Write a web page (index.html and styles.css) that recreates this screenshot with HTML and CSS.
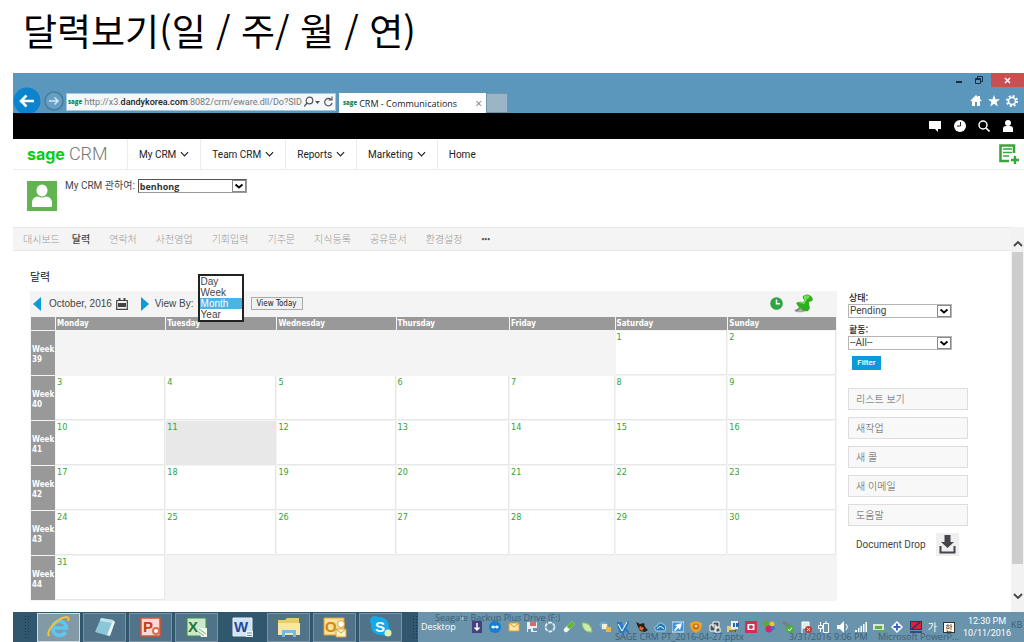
FILE: index.html
```html
<!DOCTYPE html>
<html lang="ko">
<head>
<meta charset="utf-8">
<meta name="viewport" content="width=device-width, initial-scale=1">
<title>달력보기</title>
<link rel="stylesheet" href="styles.css">
</head>
<body>
<svg class="defs" aria-hidden="true">
  <symbol id="chev" viewBox="0 0 10 6"><path d="M1 1l4 4 4-4" fill="none" stroke="currentColor" stroke-width="1.3"/></symbol>
  <symbol id="drop" viewBox="0 0 14 12"><rect x=".5" y=".5" width="13" height="11" fill="#fff" stroke="#8a8a8a"/><path d="M3.5 4.5L7 7.5l3.500-3" fill="none" stroke="#000" stroke-width="1.800"/></symbol>
</svg>

<h1 class="slide-title">달력보기(일 / 주/ 월 / 연)</h1>

<div class="window">
  <header class="chrome">
    <div class="caption">
      <button class="cap" aria-label="Minimize"><svg width="8" height="8"><path d="M1 5h6v2H1z" fill="#17303f"/></svg></button>
      <button class="cap" aria-label="Restore"><svg width="8" height="8" fill="none" stroke="#17303f"><path d="M2.500 2V.5h5v5H6M.5 2.500h5v5h-5zM1 3.500h4"/></svg></button>
      <button class="cap close" aria-label="Close"><svg width="7" height="7"><path d="M1 1l5 5M6 1L1 6" stroke="#fff" stroke-width="1.500"/></svg></button>
    </div>
    <div class="addressrow">
      <button class="back" aria-label="Back"><svg width="28" height="28" viewBox="0 0 28 28"><circle cx="14" cy="14" r="13.500" fill="#0b84cd"/><path d="M21 14H8M13.500 8.500L8 14l5.500 5.500" fill="none" stroke="#fff" stroke-width="2.500"/></svg></button>
      <button class="forward" aria-label="Forward"><svg width="20" height="20" viewBox="0 0 20 20"><circle cx="10" cy="10" r="9" fill="#659fc3" stroke="#477b9d" stroke-width="1.500"/><path d="M5 10h9M10.500 6.500L14 10l-3.500 3.500" fill="none" stroke="#d5e7f2" stroke-width="1.500"/></svg></button>
      <div class="address">
        <span class="fav">sage</span>
        <span class="url">http://x3.<b>dandykorea.com</b>:8082/crm/eware.dll/Do?SID</span>
        <svg width="30" height="12" viewBox="0 0 30 12" fill="none" stroke="#555" stroke-width="1.200"><circle cx="5.500" cy="4.500" r="3.300"/><path d="M3.200 7L0 10.500"/><path d="M11 5h5l-2.500 3z" fill="#555" stroke="none"/><path d="M27 3.500A3.700 3.700 0 1 0 28 7M28 .5v3.500h-3.500"/></svg>
      </div>
      <div class="tab"><span class="fav">sage</span><span class="tabname">CRM - Communications</span><button class="tabclose" aria-label="Close tab">×</button></div>
      <button class="newtab" aria-label="New tab"></button>
      <div class="tools">
        <svg width="12" height="12"><path d="M6 0L0 6h2v5h3V7h2v4h3V6h2L10 4V1H8v1z" fill="#fff"/></svg>
        <svg width="12" height="12"><path d="M6 0l1.500 4.200H12L8.500 7l1.300 4.500L6 8.800l-3.800 2.700L3.500 7 0 4.200h4.500z" fill="#fff"/></svg>
        <svg width="12" height="12"><circle cx="6" cy="6" r="5" fill="none" stroke="#fff" stroke-width="2" stroke-dasharray="2 1.930"/><circle cx="6" cy="6" r="3.500" fill="none" stroke="#fff" stroke-width="1.500"/></svg>
      </div>
    </div>
  </header>

  <div class="blackbar">
    <svg width="13" height="12"><path d="M0 1h12v8H9v3L6 9H0z" fill="#fff"/></svg>
    <svg width="12" height="12"><circle cx="6" cy="6" r="6" fill="#fff"/><path d="M6.500 2v4H3" fill="none" stroke="#222"/></svg>
    <svg width="12" height="12"><circle cx="5" cy="5" r="4" fill="none" stroke="#fff" stroke-width="1.500"/><path d="M8 8l3.500 3.500" stroke="#fff" stroke-width="1.600"/></svg>
    <svg width="12" height="12"><circle cx="6" cy="3" r="3" fill="#fff"/><path d="M1 12V9q0-3 3-3h4q3 0 3 3v3z" fill="#fff"/></svg>
  </div>

  <nav class="mainnav">
    <div class="logo"><b>sage</b><span>CRM</span></div>
    <a href="#">My CRM <svg width="9" height="6"><use href="#chev"/></svg></a>
    <a href="#">Team CRM <svg width="9" height="6"><use href="#chev"/></svg></a>
    <a href="#">Reports <svg width="9" height="6"><use href="#chev"/></svg></a>
    <a href="#">Marketing <svg width="9" height="6"><use href="#chev"/></svg></a>
    <a href="#" class="last">Home</a>
    <button class="addnew" aria-label="New"><svg width="21" height="21" viewBox="0 0 21 21"><path d="M16 9V1.500H2.500V17H11" fill="none" stroke="#38a63c" stroke-width="2.600"/><path d="M5 5h9M5 8.500h9M5 12h6" stroke="#38a63c" stroke-width="1.700"/><path d="M17 12v8M13 16h8" stroke="#38a63c" stroke-width="2.400"/></svg></button>
  </nav>

  <div class="context">
    <svg class="avatar" width="30" height="30" viewBox="0 0 30 30"><path fill="#61b450" d="M0 0h30v30H0z"/><ellipse cx="15" cy="9.500" rx="5.500" ry="6" fill="#fff"/><path d="M5 25v-3q0-6 6-6.500 4 2 8 0 6 .5 6 6.500v3q0 1-1 1H6q-1 0-1-1z" fill="#fff"/></svg>
    <label for="who">My CRM 관하여:</label>
    <span class="combo who"><select id="who"><option>benhong</option></select><svg width="14" height="12"><use href="#drop"/></svg></span>
  </div>

  <div class="work">
    <div class="pane">
      <nav class="tabs">
        <a href="#">대시보드</a><a href="#" class="on">달력</a><a href="#">연락처</a><a href="#">사전영업</a><a href="#">기회입력</a><a href="#">기주문</a><a href="#">지식등록</a><a href="#">공유문서</a><a href="#">환경설정</a><a href="#" class="more">•••</a>
      </nav>
      <main class="content">
        <h2>달력</h2>
        <div class="columns">
          <section class="calendar">
            <div class="calbar">
              <button aria-label="Previous"><svg width="8" height="14"><path d="M8 0v14L0 7z" fill="#0a9bd8"/></svg></button>
              <span class="month">October, 2016</span>
              <svg class="calicon" width="12" height="12" viewBox="0 0 12 12"><path d="M.7 2.500h10.600v8.800H.7z" fill="none" stroke="#444" stroke-width="1.200"/><path d="M2.500 0h2v3h-2zM7.500 0h2v3h-2zM2 5h8v4H2z" fill="#444"/></svg>
              <button aria-label="Next"><svg width="8" height="14"><path d="M0 0v14l8-7z" fill="#0a9bd8"/></svg></button>
              <label class="viewby" for="view">View By:</label>
              <span class="viewslot"><select id="view" size="4"><option>Day</option><option>Week</option><option selected>Month</option><option>Year</option></select></span>
              <button class="today">View Today</button>
              <span class="calactions">
                <svg width="13" height="13" viewBox="0 0 13 13"><circle cx="6.500" cy="6.500" r="6.300" fill="#30a343"/><path d="M6.500 2.500v4.300H10" fill="none" stroke="#fff" stroke-width="1.500"/></svg>
                <svg width="20" height="19" viewBox="0 0 20 19"><ellipse cx="6" cy="16.500" rx="5.500" ry="1.800" fill="#aaa"/><path d="M8 12l-6 5" stroke="#777" stroke-width="1.500"/><path d="M9 2q4-3 8 0 3 3 1 5l-3 1v3q2 3-1 6-4 1-7-2-3-2-5-6 3-2 7-1l2-2q-3-1-2-4z" fill="#2fae20"/><path d="M10 2q4-2 6 1l-3 2-2 4-1 1q-3-1-6-1 2-1 5-1l2-2q-2-2-1-4z" fill="#74df55"/></svg>
              </span>
            </div>
            <table>
              <colgroup><col class="wk"><col class="mon"><col class="tue"><col class="wed"><col class="thu"><col class="fri"><col class="sat"><col class="sun"></colgroup>
              <thead><tr><th></th><th>Monday</th><th>Tuesday</th><th>Wednesday</th><th>Thursday</th><th>Friday</th><th>Saturday</th><th>Sunday</th></tr></thead>
              <tbody>
                <tr><th>Week<br>39</th><td class="off" colspan="5"></td><td>1</td><td>2</td></tr>
                <tr><th>Week<br>40</th><td>3</td><td>4</td><td>5</td><td>6</td><td>7</td><td>8</td><td>9</td></tr>
                <tr><th>Week<br>41</th><td>10</td><td class="now">11</td><td>12</td><td>13</td><td>14</td><td>15</td><td>16</td></tr>
                <tr><th>Week<br>42</th><td>17</td><td>18</td><td>19</td><td>20</td><td>21</td><td>22</td><td>23</td></tr>
                <tr><th>Week<br>43</th><td>24</td><td>25</td><td>26</td><td>27</td><td>28</td><td>29</td><td>30</td></tr>
                <tr><th>Week<br>44</th><td>31</td><td class="off" colspan="6"></td></tr>
              </tbody>
            </table>
          </section>
          <aside class="side">
            <label for="status">상태:</label>
            <span class="combo"><select id="status"><option>Pending</option></select><svg width="14" height="12"><use href="#drop"/></svg></span>
            <label for="action">활동:</label>
            <span class="combo"><select id="action"><option>--All--</option></select><svg width="14" height="12"><use href="#drop"/></svg></span>
            <button class="filter">Filter</button>
            <div class="actions">
              <button>리스트 보기</button><button>새작업</button><button>새 콜</button><button>새 이메일</button><button>도움말</button>
            </div>
            <div class="docdrop"><span>Document Drop</span><svg width="23" height="23" viewBox="0 0 23 23"><path fill="#efefef" d="M0 0h23v23H0z"/><path d="M8.500 2h6v7H18l-6.500 6L5 9h3.500z" fill="#45454c"/><path d="M4.500 13v6.500h14V13" fill="none" stroke="#45454c" stroke-width="2"/></svg></div>
          </aside>
        </div>
      </main>
    </div>
    <div class="scroll" aria-hidden="true">
      <svg width="10" height="6" viewBox="0 0 10 6"><path d="M1 5l4-4 4 4" fill="none" stroke="#444" stroke-width="1.800"/></svg>
      <span class="thumb"></span>
      <svg width="10" height="6" viewBox="0 0 10 6"><path d="M1 1l4 4 4-4" fill="none" stroke="#444" stroke-width="1.800"/></svg>
    </div>
  </div>

  <footer class="taskbar">
    <div class="ghosts" aria-hidden="true"><span class="g1">Seagate Backup Plus Drive (F:)</span><span class="g2">SAGE CRM PT_2016-04-27.pptx</span><span class="g3">3/31/2016 9:06 PM</span><span class="g4">Microsoft PowerP...</span><span class="g5">KB</span></div>
    <div class="apps">
      <i class="grip"></i>
      <button class="active" aria-label="Internet Explorer"><svg width="24" height="22" viewBox="0 0 24 22"><path d="M18.500 16a7 7 0 1 1 1-4H7" fill="none" stroke="#5cc8f2" stroke-width="3.600"/><path d="M2 20C-1 15 9 3 19 1q4 0 2 4" fill="none" stroke="#f4c332" stroke-width="2"/></svg></button>
      <button aria-label="Notes"><svg width="24" height="22" viewBox="0 0 24 22"><path d="M8 2l12 2-4 16L2 16z" fill="#8dc6d6"/><path d="M20 4l2 2-5 14-3-1z" fill="#e9f6f8"/><path d="M8 2l12 2-1 3L7 5z" fill="#bfe4ec"/></svg></button>
      <button aria-label="PowerPoint"><svg width="24" height="22" viewBox="0 0 24 22"><path d="M2 2h19v18H2z" fill="#f9ddd4" stroke="#d9512e" stroke-width="1.500"/><text x="4" y="16" class="app ppt">P</text><circle cx="17" cy="15" r="3" fill="#fff" stroke="#e06c4a" stroke-width="2"/></svg></button>
      <button aria-label="Excel"><svg width="24" height="22" viewBox="0 0 24 22"><path d="M2 2h19v18H2z" fill="#cfe8cc" stroke="#39924a"/><text x="3" y="16" class="app xls">X</text><path d="M13 12h9v9h-6z" fill="#f1f9ef"/><path d="M14 13l7 5M14 16l5 4" stroke="#6bb16c"/></svg></button>
      <button class="plain" aria-label="Word"><svg width="24" height="22" viewBox="0 0 24 22"><path d="M2 2h19v18H2z" fill="#d4e2f5" stroke="#e8f0fa"/><text x="3" y="16" class="app doc">W</text><path d="M15 15h7v6h-7z" fill="#f1f6fb"/><path d="M16 17h5M16 19.500h5" stroke="#5b86c4"/></svg></button>
      <button aria-label="Explorer"><svg width="24" height="22" viewBox="0 0 24 22"><path d="M1 4h7l2-2h12v17H1z" fill="#e8cb6f"/><path d="M1 7h22v12H1z" fill="#f7e7a0"/><path d="M5 21v-7h14v7h-3v-4H8v4z" fill="#6ebde7"/></svg></button>
      <button aria-label="Outlook"><svg width="24" height="22" viewBox="0 0 24 22"><path d="M1 2h20v17H1z" fill="#fbe2a0" stroke="#e7a123"/><text x="2" y="16" class="app out">O</text><circle cx="18" cy="8" r="3.500" fill="#fff" stroke="#dc9c28"/><path d="M13 13h10v8H13z" fill="#fff3c7" stroke="#d6a133"/><path d="M13 13l5 4 5-4" fill="none" stroke="#d6a133"/></svg></button>
      <button aria-label="Skype"><svg width="24" height="22" viewBox="0 0 24 22"><circle cx="11" cy="10" r="9" fill="#16a9e8"/><circle cx="6" cy="5" r="5" fill="#16a9e8"/><circle cx="16" cy="15" r="5" fill="#16a9e8"/><text x="6" y="16" class="app sky">S</text><circle cx="19" cy="17" r="3.500" fill="#dff3b5"/></svg></button>
      <i class="grip"></i>
    </div>
    <span class="desk">Desktop</span><span class="raquo">»</span>
    <div class="tray">
      <svg viewBox="0 0 12 12"><path d="M1 0h10v12H1z" fill="#46407e"/><path d="M6 2v7M3.500 6.500L6 9l2.500-2.500" fill="none" stroke="#fff" stroke-width="1.500"/></svg>
      <svg viewBox="0 0 12 12"><circle cx="6" cy="6" r="6" fill="#147fd3"/><path d="M2 6l2.500-2v1.300h3V4L10 6 7.500 8V6.800h-3V8z" fill="#fff"/></svg>
      <svg viewBox="0 0 12 12"><path d="M1 2h10v8H1z" fill="#ffe9a8" stroke="#e0a030"/><path d="M1 2l5 4 5-4" fill="none" stroke="#dd9425"/></svg>
      <svg viewBox="0 0 12 12"><path d="M1 1h10v10H1z" fill="#e8edf1"/><path d="M4 1h6v4H4z" fill="#d76c64"/><path d="M2 8h3v3H2zM7 7h4v3H7z" fill="#708fae"/></svg>
      <svg viewBox="0 0 12 12"><circle cx="6" cy="6" r="4.500" fill="none" stroke="#e5edf2" stroke-width="1.800" stroke-dasharray="3.700 1"/></svg>
      <svg viewBox="0 0 12 12"><path d="M3 9l6-6" stroke="#f2f6ef" stroke-width="4.500" stroke-linecap="round"/><path d="M6.500 5.500L9 3" stroke="#61b928" stroke-width="4.500" stroke-linecap="round"/></svg>
      <svg viewBox="0 0 12 12"><path d="M1 2q9-1 10 9-9 1-10-9z" fill="#cdeca9" stroke="#8fc86a"/></svg>
      <svg viewBox="0 0 12 12"><path d="M0 3q5-5 9 0v6H3z" fill="#6bb0d3"/><path d="M3 3h5v5H3z" fill="#f4efd4"/><path d="M7 6h5v5H7z" fill="#e7b64b"/></svg>
      <svg viewBox="0 0 12 12"><path d="M0 2h4l2 8-2 2zM6 12L12 0M7 6l5 6" fill="#3b94db" stroke="#2478c8" stroke-width="2"/><path d="M1 3l4 7L10 1" fill="none" stroke="#fff"/></svg>
      <svg viewBox="0 0 12 12"><path d="M0 1l4 2 4-1 1 4 3 3-3 2-5-1-2-4z" fill="#2c211c"/><path d="M4 5l4 2-2 3-3-2z" fill="#e16724"/></svg>
      <svg viewBox="0 0 12 12"><path d="M2 10q-3-4 1-5 2-5 6-2 4 2 2 7z" fill="#2579b8" stroke="#a5d2ec"/><path d="M3 8q3-5 7 0" fill="none" stroke="#fff"/></svg>
      <svg viewBox="0 0 12 12"><path d="M0 1h12v10H0z" fill="#3d94e0" stroke="#dcecf7"/><path d="M10 2L8 9 6.500 7 3 10l-1-1 3-3.500L3 4z" fill="#fff"/></svg>
      <svg viewBox="0 0 12 12"><path d="M6 0l6 2q0 8-6 10Q0 10 0 2z" fill="#eda51f"/><circle cx="6" cy="5.500" r="3" fill="#ce5e24"/><circle cx="6" cy="5" r="1.500" fill="#ffe06a"/></svg>
      <svg viewBox="0 0 12 12"><path d="M4 1h6v5H4zM1 4h6v6H1zM6 7h5v4H6z" fill="#4a4f54" stroke="#fff"/></svg>
      <svg viewBox="0 0 12 12"><path d="M0 5h8v6H0z" fill="#e8cb6f"/><path d="M4 0h7v8H4z" fill="#e8f0f6"/><path d="M6 2h2v4H6zM9 2h3v4H9z" fill="#2c66a8"/><path d="M2 10h7" stroke="#222"/></svg>
      <svg viewBox="0 0 12 12"><path d="M0 0h12v12H0z" fill="#d82c53"/><path d="M2.500 3h7v6h-7z" fill="#fff"/><circle cx="6" cy="6" r="2" fill="#d82c53"/></svg>
      <svg viewBox="0 0 12 12"><circle cx="3" cy="3" r="3" fill="#63a82b"/><circle cx="9" cy="3" r="2.500" fill="#f0c32f"/><circle cx="6" cy="8" r="3.500" fill="#c92780"/><circle cx="10" cy="7" r="2" fill="#3878c7"/></svg>
      <svg viewBox="0 0 12 12"><path d="M1 1l5 3v4" fill="none" stroke="#777e83" stroke-width="3"/><circle cx="8" cy="8" r="4" fill="#4aaf37"/><path d="M6 8l1.500 2L10 6.500" fill="none" stroke="#fff"/></svg>
      <svg viewBox="0 0 12 12"><path d="M2 1v11M2 1h7v6H2" fill="#dce8f0" stroke="#fff"/><circle cx="8.500" cy="8.500" r="3.500" fill="#cf3535"/><path d="M7 7l3 3M10 7l-3 3" stroke="#fff"/></svg>
      <svg viewBox="0 0 12 12" fill="none" stroke="#fff"><path d="M5.500 2.500h5v9h-5zM7 1h2M2.500 1v3M.5 4.500h4v3h-4zM2.500 8v3"/></svg>
      <svg viewBox="0 0 12 12"><path d="M0 4h3l4-4v12L3 8H0z" fill="#fff"/><path d="M9 3q3 3 0 6" fill="none" stroke="#fff"/></svg>
      <svg viewBox="0 0 12 12"><path d="M0 9h2v2H0zM3 7h1.500v4H3zM5.500 5H7v6H5.500zM8 3h1.500v8H8zM10.500 1H12v10h-1.500z" fill="#fff"/></svg>
      <svg viewBox="0 0 12 12"><path d="M0 3h11v6H0z" fill="#d9e6cf"/><path d="M2 5h7v3H2zM6 9h6L9 12z" fill="#55b548"/></svg>
      <svg viewBox="0 0 12 12"><path d="M6 0l6 6-6 6-6-6z" fill="#fff"/><path d="M6 2.500v7M2.500 6h7" stroke="#3b66c8" stroke-width="2"/></svg>
      <svg viewBox="0 0 12 12"><path d="M0 0h12v9H0z" fill="#25346b"/><path d="M1 1h10v7H1z" fill="#d22630"/><path d="M2 8l8-7M0 11h12" stroke="#25346b" stroke-width="1.500"/></svg>
      <span class="ime">가</span><span class="ime boxed">한</span>
    </div>
    <time class="clock">12:30 PM<br>10/11/2016</time>
  </footer>
</div>
</body>
</html>
```

FILE: styles.css
```css
* { box-sizing: border-box; }
body {
  margin: 0;
  min-height: 100vh;
  display: flex;
  flex-direction: column;
  background: #fff;
  color: #444;
  font-family: "Liberation Sans", "Noto Sans CJK KR", sans-serif;
  font-size: 10px;
}
svg { display: block; flex: none; }
button { padding: 0; border: 0; background: none; font: inherit; color: inherit; }
a { color: inherit; text-decoration: none; }
.defs { position: absolute; width: 0; height: 0; }

.slide-title {
  margin: 0;
  padding: 6px 23px 0;
  height: 73px;
  color: #000;
  font: 400 37px/48px "Noto Sans CJK KR", sans-serif;
}
.window { flex: 1; display: flex; flex-direction: column; margin-left: 13px; }

/* Browser frame */
.chrome { background: #5b97bc; }
.caption { display: flex; justify-content: flex-end; height: 14px; }
.cap { width: 20px; display: grid; place-items: center; }
.close { width: 33px; margin-left: 2px; background: #c9504f; }
.addressrow {
  display: flex;
  align-items: flex-end;
  height: 26px;
  font-family: "Open Sans", sans-serif;
  font-size: 9px;
}
.back { margin: 0 3px -2px 0; }
.forward { margin: 0 2px 2px 0; }
.address {
  display: flex;
  align-items: center;
  gap: 2px;
  width: 270px;
  height: 18px;
  margin: 0 3px 2px 0;
  padding: 0 2px 0 1px;
  background: #f4f8fb;
  border: 1px solid #a6c6dc;
}
.url { flex: 1; color: #777; white-space: nowrap; font-family: Roboto, sans-serif; }
.url b { color: #222; font-weight: 500; }
.fav { color: #0a8a62; font-size: 6px; font-weight: 800; line-height: 8px; }
.tab { display: flex; align-items: center; gap: 2px; width: 147px; height: 20px; padding: 0 4px; background: #fff; color: #222; }
.tabname { flex: 1; white-space: nowrap; }
.tabclose { color: #777; font-size: 12px; }
.newtab { width: 22px; height: 20px; background: #9bb4c6; border: 1px solid #6d93ad; }
.tools { display: flex; gap: 6px; margin: 0 6px 6px auto; }
.blackbar { display: flex; justify-content: flex-end; align-items: center; gap: 12px; height: 26px; padding-right: 10px; background: #000; }

/* Application header */
.mainnav { display: flex; align-items: stretch; height: 31px; border-bottom: 1px solid #ececec; color: #222; }
.logo { display: flex; align-items: center; gap: 4px; width: 115px; padding-left: 14px; border-right: 1px solid #ececec; }
.logo b { color: #0bcb17; font: 700 16px/24px Inter, sans-serif; }
.logo span { color: #777; font: 300 18px/24px Roboto, sans-serif; }
.mainnav a { display: flex; align-items: center; gap: 4px; padding: 0 11px; border-right: 1px solid #ececec; font-family: Roboto, sans-serif; }
.mainnav .last { border: 0; }
.addnew { margin: 0 5px 0 auto; }
.context { display: flex; align-items: flex-start; gap: 3px; height: 57px; padding: 9px 14px; }
.avatar { margin-top: 2px; }
.context label { padding-left: 5px; font: 10px/13px Roboto, "Noto Sans CJK KR", sans-serif; }
.combo { display: grid; align-items: center; width: 104px; }
.combo select, .combo svg { grid-area: 1 / 1; }
.combo select {
  width: 100%;
  height: 14px;
  padding: 0 16px 0 1px;
  appearance: none;
  border: 1px solid #b5b5b5;
  border-radius: 0;
  background: #fff;
  color: #444;
  font: 10px/12px Roboto, sans-serif;
}
.combo svg { justify-self: end; margin-right: 1px; pointer-events: none; }
.who { width: 109px; }
.who select { border-color: #555 #999 #999 #555; font: 700 9px/11px "Open Sans", sans-serif; color: #333; }

/* Tabs and scrolling pane */
.work { flex: 1; display: flex; }
.pane { flex: 1; min-width: 0; }
.tabs {
  display: flex;
  align-items: center;
  gap: 19px;
  height: 24px;
  padding: 0 10px;
  background: #f4f4f4;
  border-top: 1px solid #e8e8e8;
  border-bottom: 1px solid #e8e8e8;
  color: #999;
  font: 300 10px/12px "Noto Sans CJK KR", sans-serif;
  white-space: nowrap;
}
.tabs .on { margin-left: -7px; color: #444; font-weight: 500; }
.tabs .more { color: #555; font-size: 9px; }
.scroll { display: flex; flex-direction: column; align-items: center; gap: 5px; width: 13px; padding: 14px 0 13px; background: #f2f2f2; }
.thumb { width: 11px; flex: 1; margin-bottom: 24px; background: #cdcdcd; }
.content { padding: 17px 43px 0 17px; }
.content h2 { margin: 0; color: #222; font: 400 11px/16px "Noto Sans CJK KR", sans-serif; }
.columns { display: flex; gap: 11px; margin-top: 7px; }
.calendar { flex: 1; min-width: 0; background: #f4f4f4; }
.calbar { display: flex; align-items: center; height: 25px; padding: 0 23px 0 3px; }
.month { margin: 0 4px 0 8px; }
.calicon { margin-right: 13px; }
.viewby { margin-left: 6px; }
.viewslot { position: relative; width: 45px; height: 16px; margin: 0 8px 0 4px; }
.viewslot select {
  position: absolute;
  top: -22px;
  left: 0;
  width: 46px;
  height: 48px;
  padding: 0;
  overflow: hidden;
  border: 2px solid #222;
  border-radius: 0;
  background: #fff;
  outline: 0;
  font: 10px/11px "Liberation Sans", sans-serif;
  color: #444;
  scrollbar-width: none;
}
.viewslot option { min-height: 11px; height: 11px; padding: 0 1px; }
.viewslot option:checked { background: #4db3e3 linear-gradient(#4db3e3, #4db3e3); color: #fff; }
.today { width: 52px; height: 13px; border: 1px solid #aaa; background: #f1f1f1; color: #222; font: 8px/10px "DejaVu Sans Condensed", sans-serif; white-space: nowrap; }
.calactions { display: flex; align-items: center; gap: 11px; margin-left: auto; }

table { width: 100%; table-layout: fixed; border-collapse: separate; border-spacing: 1px; font: 9px/11px "DejaVu Sans Condensed", sans-serif; }
.wk { width: 24px; }
.mon { width: 13.7%; }
.tue { width: 13.8%; }
.wed { width: 14.8%; }
.thu { width: 14.1%; }
.fri { width: 13.1%; }
.sat { width: 14%; }
th { padding: 0 1px; background: #999; color: #fff; text-align: left; font-weight: 700; }
thead th { height: 13px; font-size: 8px; }
tbody th { height: 44px; padding: 3px 0 0 1px; font-size: 8px; line-height: 10px; }
td { padding: 1px; vertical-align: top; background: #fff; border: solid #e7e7e7; border-width: 0 1px 1px 0; color: #31a531; }
td.off { background: #f4f4f4; border-color: #f4f4f4; }
td.now { background: #e8e8e8; }

.side { width: 120px; display: flex; flex-direction: column; align-items: flex-start; }
.side label { margin-left: 1px; color: #222; font: 500 9px/13px "Noto Sans CJK KR", sans-serif; }
.side .combo + label { margin-top: 5px; }
.filter { width: 29px; height: 14px; margin: 6px 4px 18px; background: #0a9bd8; color: #fff; font: 500 8px/14px Roboto, sans-serif; }
.actions { display: flex; flex-direction: column; gap: 7px; width: 100%; }
.actions button { height: 22px; padding-left: 7px; background: #f8f8f8; border: 1px solid #ddd; color: #555; text-align: left; font: 300 10px/18px "Noto Sans CJK KR", sans-serif; }
.docdrop { display: flex; align-items: center; gap: 10px; margin: 7px 0 0 8px; font: 10px/12px Roboto, sans-serif; white-space: nowrap; }

/* Taskbar */
.taskbar {
  position: relative;
  display: flex;
  align-items: center;
  height: 30px;
  overflow: hidden;
  background: #6a93ac;
  color: #fff;
  font: 9px/12px "Open Sans", sans-serif;
}
.apps { position: relative; display: flex; align-items: center; gap: 3px; height: 100%; padding-left: 11px; background: #31576f; }
.apps button { width: 43px; height: 29px; display: grid; place-items: center; background: #507389; border: 1px solid #7895a7; }
.apps .active { background: #8399a6; border-color: #d0dce3; }
.apps .plain { background: none; border: 0; }
.grip { width: 6px; height: 24px; margin-right: 4px; background: radial-gradient(circle, #17384d 1px, transparent 1px) 0 0 / 3px 3px; }
.grip:last-child { margin: 0 0 0 7px; }
.app { font: 700 15px "Liberation Sans", sans-serif; }
.ppt { fill: #c93a14; }
.xls { fill: #1f7a34; }
.doc { fill: #1f4b9c; }
.out { fill: #cf8a10; }
.sky { fill: #fff; }
.desk { padding-left: 3px; position: relative; }
.raquo { align-self: flex-start; margin: 0 7px 0 4px; }
.tray { position: relative; display: flex; flex: 1; align-items: center; justify-content: space-between; }
.tray svg { width: 12px; height: 12px; }
.ime { font: 10px/12px "Noto Sans CJK KR", sans-serif; }
.boxed { border: 1px solid #333; background: #fff; color: #222; font-size: 8px; line-height: 9px; padding: 0 1px; }
.clock { position: relative; width: 64px; padding-right: 10px; margin-left: 5px; text-align: center; font-family: Roboto, sans-serif; }
.ghosts { position: absolute; inset: 0; color: #3c6076; white-space: nowrap; line-height: 10px; }
.ghosts span { position: absolute; top: 20px; }
.ghosts .g1 { top: 1px; left: 422px; }
.ghosts .g2 { left: 602px; }
.ghosts .g3 { left: 776px; }
.ghosts .g4 { left: 865px; }
.ghosts .g5 { top: 8px; left: 998px; }
```
